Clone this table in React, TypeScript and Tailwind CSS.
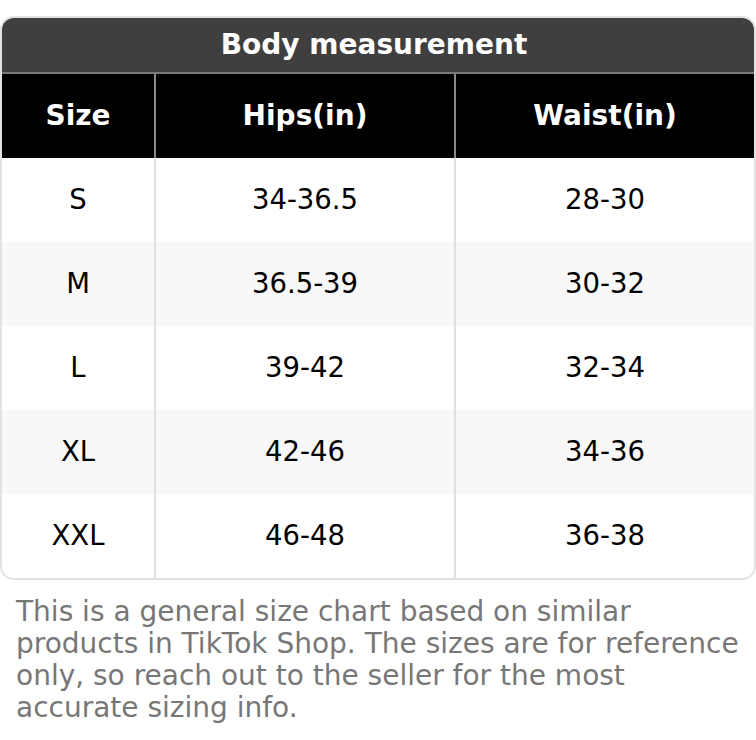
import React from "react";

const rows = [
  ["S", "34-36.5", "28-30"],
  ["M", "36.5-39", "30-32"],
  ["L", "39-42", "32-34"],
  ["XL", "42-46", "34-36"],
  ["XXL", "46-48", "36-38"],
];

export default function App() {
  return (
    <div
      className="w-[756px] h-[740px] bg-white pt-[16px]"
      style={{ fontFamily: '"DejaVu Sans", sans-serif' }}
    >
      <div className="rounded-[14px] border-2 border-[#e2e2e2] overflow-hidden bg-white">
        <div className="h-[56px] bg-[#3f3f3f] text-white font-bold text-[28px] flex items-center justify-center pr-[8px] border-b-2 border-[#7a7a7a]">
          Body measurement
        </div>
        <div className="grid grid-cols-[154px_300px_1fr] bg-black text-white font-bold text-[28px] h-[84px]">
          <div className="flex items-center justify-center border-r-2 border-[#8a8a8a]">Size</div>
          <div className="flex items-center justify-center border-r-2 border-[#8a8a8a]">Hips(in)</div>
          <div className="flex items-center justify-center">Waist(in)</div>
        </div>
        {rows.map((r, i) => (
          <div
            key={r[0]}
            className={
              "grid grid-cols-[154px_300px_1fr] h-[84px] text-[27.5px] text-black " +
              (i % 2 === 1 ? "bg-[#f8f8f8]" : "bg-white")
            }
          >
            <div className="flex items-center justify-center border-r-2 border-[#e0e0e0]">{r[0]}</div>
            <div className="flex items-center justify-center border-r-2 border-[#e0e0e0]">{r[1]}</div>
            <div className="flex items-center justify-center">{r[2]}</div>
          </div>
        ))}
      </div>
      <p className="px-[16px] pt-[16px] text-[28px] leading-[32px] text-[#777777]">
        This is a general size chart based on similar products in TikTok Shop. The sizes are for reference only, so reach out to the seller for the most accurate sizing info.
      </p>
    </div>
  );
}
